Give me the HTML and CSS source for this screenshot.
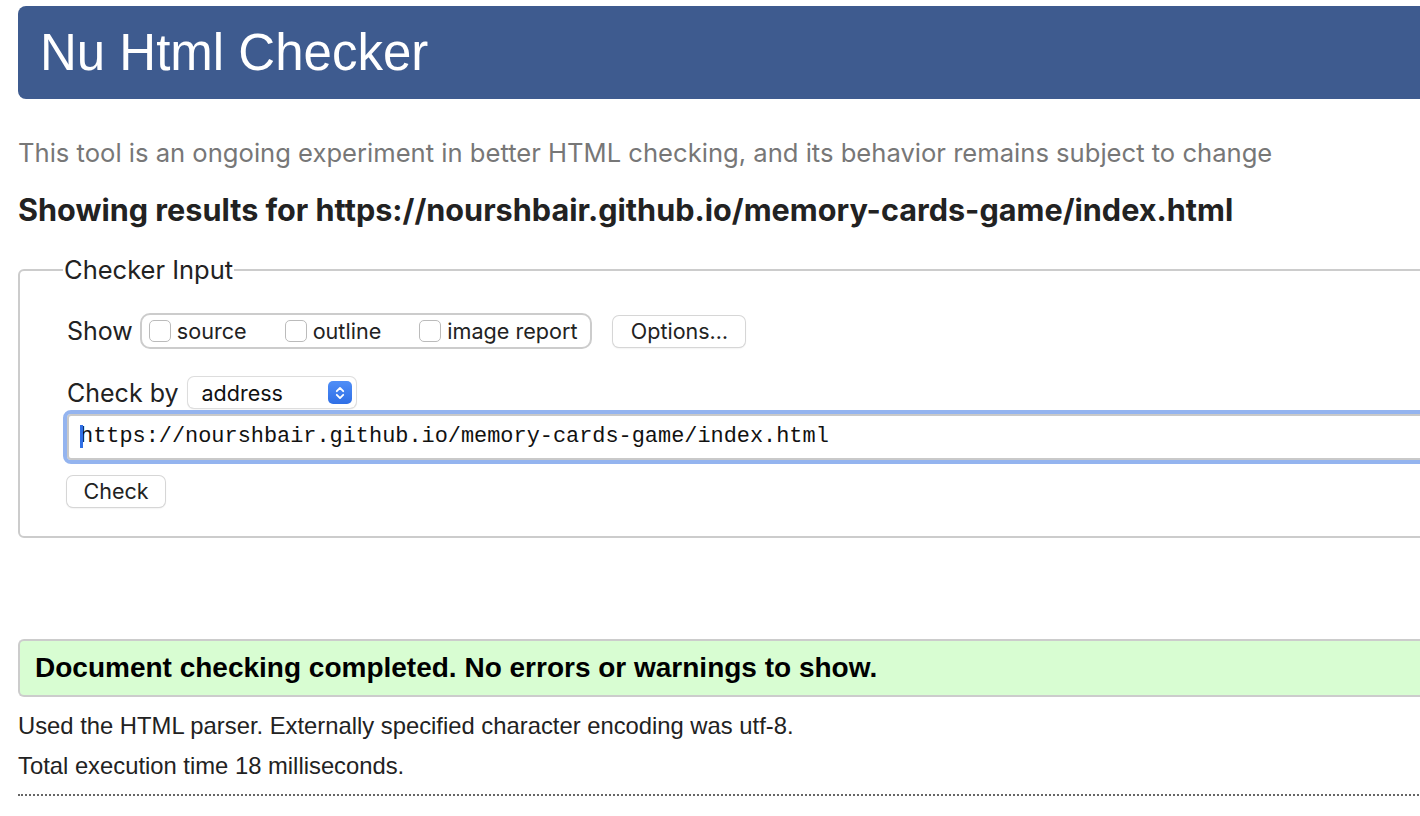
FILE: index.html
```html
<!DOCTYPE html>
<html lang="en">
<head>
<meta charset="utf-8">
<title>Nu Html Checker</title>
<link rel="stylesheet" href="styles.css">
</head>
<body>
<div class="page">
  <h1 class="banner">Nu Html Checker</h1>
  <p class="intro">This tool is an ongoing experiment in better HTML checking, and its behavior remains subject to change</p>
  <h2 class="showing">Showing results for https://nourshbair.github.io/memory-cards-game/index.html</h2>
  <fieldset class="input-box">
    <legend>Checker Input</legend>
    <div class="row show-row">
      <span class="label">Show</span>
      <div class="show-group">
        <label class="opt"><span class="cb"></span>source</label>
        <label class="opt"><span class="cb"></span>outline</label>
        <label class="opt"><span class="cb"></span>image report</label>
      </div>
      <span class="btn options">Options…</span>
    </div>
    <div class="row by-row">
      <span class="label">Check by</span>
      <div class="select">
        <span>address</span>
        <span class="stepper">
          <svg width="24" height="24" viewBox="0 0 24 24"><path d="M8.5 10 L12 6.5 L15.5 10 M8.5 14 L12 17.5 L15.5 14" fill="none" stroke="#fff" stroke-width="2" stroke-linecap="round" stroke-linejoin="round"/></svg>
        </span>
      </div>
    </div>
    <div class="url-field"><span class="caret"></span>https://nourshbair.github.io/memory-cards-game/index.html</div>
    <div class="row"><span class="btn check">Check</span></div>
  </fieldset>
  <div class="success">Document checking completed. No errors or warnings to show.</div>
  <p class="info first">Used the HTML parser. Externally specified character encoding was utf-8.</p>
  <p class="info">Total execution time 18 milliseconds.</p>
  <hr class="dots">
</div>
</body>
</html>
```
FILE: styles.css
```css
html, body {
  margin: 0;
  padding: 0;
  background: #fff;
  overflow: hidden;
}
body {
  width: 1420px;
  height: 816px;
}
.page {
  width: 1600px;
  padding: 6px 0 0 18px;
  font-family: "Liberation Sans", Arial, sans-serif;
  color: #222;
}
.banner {
  margin: 0;
  height: 93px;
  box-sizing: border-box;
  background: #3e5b8f;
  color: #fff;
  border-radius: 8px 0 0 8px;
  font-family: "Liberation Sans", Arial, sans-serif;
  font-weight: normal;
  font-size: 51px;
  line-height: 93px;
  padding-left: 22px;
}
.intro {
  margin: 39px 0 0;
  font-family: Inter, "Liberation Sans", sans-serif;
  color: #777;
  font-size: 25.6px;
  line-height: 30px;
  white-space: nowrap;
}
.showing {
  margin: 24px 0 0;
  font-family: Inter, "Liberation Sans", sans-serif;
  font-weight: 700;
  font-size: 30.6px;
  line-height: 36px;
  color: #222;
  white-space: nowrap;
}
.input-box {
  margin: 26px 0 0;
  border: 2px solid #ccc;
  border-radius: 6px;
  padding: 28px 0 29px 47px;
  font-family: Inter, "Liberation Sans", sans-serif;
}
.input-box legend {
  font-size: 25.5px;
  line-height: 31px;
  padding: 0 1px;
  margin-left: -4px;
  color: #222;
}
.row {
  display: flex;
  align-items: center;
}
.label {
  font-size: 25px;
  color: #222;
}
.show-row .label { margin-right: 7px; }
.show-group {
  display: flex;
  align-items: center;
  height: 36px;
  box-sizing: border-box;
  border: 2px solid #ccc;
  border-radius: 10px;
  padding: 0 13px 0 7px;
  gap: 38px;
}
.opt {
  display: flex;
  align-items: center;
  font-size: 21.6px;
  color: #222;
}
.cb {
  width: 22px;
  height: 22px;
  box-sizing: border-box;
  border: 1px solid #bbb;
  border-radius: 5px;
  margin-right: 6px;
  background: #fff;
}
.btn {
  display: inline-block;
  background: #fff;
  border-radius: 6px;
  box-shadow: 0 0 0 1px #d6d6d6, 0 1px 2px rgba(0,0,0,0.15);
  font-size: 21.5px;
  color: #222;
  height: 31px;
  line-height: 31px;
  text-align: center;
}
.options {
  margin-left: 21px;
  width: 132px;
}
.by-row {
  margin-top: 28px;
  height: 31px;
}
.by-row .label { margin-right: 9px; }
.select {
  display: flex;
  align-items: center;
  justify-content: space-between;
  width: 168px;
  height: 31px;
  box-sizing: border-box;
  padding: 0 4px 0 14px;
  border-radius: 6px;
  box-shadow: 0 0 0 1px #ddd, 0 1px 2px rgba(0,0,0,0.12);
  font-size: 21.5px;
  color: #111;
}
.stepper {
  width: 24px;
  height: 23px;
  border-radius: 5px;
  background: linear-gradient(#4f8ef7, #2f6fe6);
  display: flex;
  align-items: center;
  justify-content: center;
}
.stepper svg { width: 22px; height: 22px; }
.url-field {
  margin: 2px 0 0 -4px;
  height: 54px;
  box-sizing: border-box;
  border: 4px solid #94b4ef;
  border-radius: 8px 0 0 8px;
  box-shadow: inset 0 0 0 2px #c9c9c9;
  padding-left: 13px;
  font-family: "Liberation Mono", "DejaVu Sans Mono", monospace;
  font-size: 21.9px;
  line-height: 46px;
  color: #111;
  position: relative;
  white-space: nowrap;
}
.caret {
  position: absolute;
  left: 13px;
  top: 11px;
  width: 3px;
  height: 23px;
  background: #2f6fe6;
}
.check {
  margin-top: 12px;
  width: 98px;
}
.success {
  margin-top: 101px;
  height: 58px;
  box-sizing: border-box;
  border: 2px solid #ccc;
  border-right: none;
  border-radius: 6px 0 0 6px;
  background: #d8fdd2;
  padding-left: 15px;
  font-family: "Liberation Sans", Arial, sans-serif;
  font-weight: bold;
  font-size: 28px;
  line-height: 54px;
  color: #000;
  white-space: nowrap;
}
.info {
  margin: 0;
  font-family: "Liberation Sans", Arial, sans-serif;
  font-size: 23.8px;
  line-height: 40px;
  color: #222;
}
.info.first { margin-top: 9px; }
.dots {
  margin: 8px 0 0;
  border: none;
  border-top: 2px dotted #666;
  height: 0;
}
```
